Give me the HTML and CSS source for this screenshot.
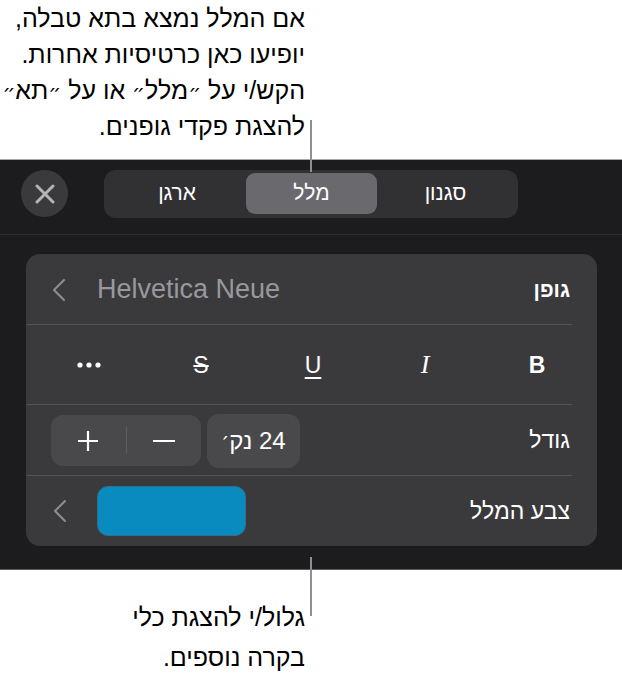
FILE: index.html
```html
<!DOCTYPE html>
<html lang="he">
<head>
<meta charset="utf-8">
<link rel="stylesheet" href="styles.css">
</head>
<body>
<div class="page">
  <div class="callout callout-top" dir="rtl">
    <p class="callout-text">אם המלל נמצא בתא טבלה,<br>יופיעו כאן כרטיסיות אחרות.<br>הקש/י על <span class="gersh">״</span>מלל<span class="gersh">״</span> או על <span class="gersh">״</span>תא<span class="gersh">״</span><br>להצגת פקדי גופנים.</p>
  </div>

  <div class="panel">
    <span class="leader leader-top"></span>
    <span class="leader leader-bottom"></span>
    <div class="header">
      <button class="close" aria-label="סגירה">
        <svg width="20" height="20" viewBox="0 0 20 20"><path d="M2 2 L18 18 M18 2 L2 18" stroke="#b4b4b9" stroke-width="3" stroke-linecap="round" fill="none"/></svg>
      </button>
      <div class="segmented" dir="rtl">
        <div class="seg">סגנון</div>
        <div class="seg seg-selected">מלל</div>
        <div class="seg">ארגן</div>
      </div>
    </div>

    <div class="card" dir="rtl">
      <div class="row row-font">
        <div class="label label-strong">גופן</div>
        <div class="controls" dir="ltr">
          <svg class="chev" width="14" height="24" viewBox="0 0 14 24"><path d="M12 2 L2 12 L12 22" stroke="#8e8e93" stroke-width="2" fill="none" stroke-linecap="round" stroke-linejoin="round"/></svg>
          <span class="font-name">Helvetica Neue</span>
        </div>
      </div>

      <div class="row row-style" dir="ltr">
        <span class="sty sty-more">
          <svg width="26" height="8" viewBox="0 0 26 8"><circle cx="4" cy="4" r="2.6" fill="#fff"/><circle cx="13" cy="4" r="2.6" fill="#fff"/><circle cx="22" cy="4" r="2.6" fill="#fff"/></svg>
        </span>
        <span class="sty sty-strike">S</span>
        <span class="sty sty-under">U</span>
        <span class="sty sty-italic">I</span>
        <span class="sty sty-bold">B</span>
      </div>

      <div class="row row-size">
        <div class="label">גודל</div>
        <div class="controls" dir="ltr">
          <div class="stepper">
            <span class="step">
              <svg width="24" height="24" viewBox="0 0 24 24"><path d="M12 2 V22 M2 12 H22" stroke="#fff" stroke-width="2.2" fill="none"/></svg>
            </span>
            <span class="step-sep"></span>
            <span class="step">
              <svg width="26" height="24" viewBox="0 0 26 24"><path d="M2 12 H24" stroke="#fff" stroke-width="2.2" fill="none"/></svg>
            </span>
          </div>
          <div class="size-box" dir="rtl">24 נק<span class="gersh">׳</span></div>
        </div>
      </div>

      <div class="row row-color">
        <div class="label">צבע המלל</div>
        <div class="controls" dir="ltr">
          <svg class="chev" width="14" height="24" viewBox="0 0 14 24"><path d="M12 2 L2 12 L12 22" stroke="#8e8e93" stroke-width="2" fill="none" stroke-linecap="round" stroke-linejoin="round"/></svg>
          <span class="swatch"></span>
        </div>
      </div>
    </div>
  </div>

  <div class="callout callout-bottom" dir="rtl">
    <p class="callout-text">גלול/י להצגת כלי<br>בקרה נוספים.</p>
  </div>
</div>
</body>
</html>
```

FILE: styles.css
```css
* { box-sizing: border-box; }

html, body {
  margin: 0;
  padding: 0;
  background: #ffffff;
}

body {
  font-family: "Liberation Sans", Arial, "DejaVu Sans", sans-serif;
  width: 622px;
  height: 673px;
  overflow: hidden;
}

.page {
  width: 622px;
}

.callout {
  padding-right: 317px;
}

.callout-text {
  margin: 0;
  font-size: 25px;
  line-height: 36px;
  color: #000;
  text-align: right;
  white-space: nowrap;
}

.gersh {
  font-family: "DejaVu Sans", sans-serif;
  font-size: 0.8em;
  line-height: 1;
}

.callout-top {
  height: 159px;
}

.callout-bottom {
  padding-top: 27px;
}

.callout-bottom .callout-text {
  line-height: 40px;
}

.panel {
  position: relative;
  background: #1c1c1e;
  border-top: 1px solid #a7a7a7;
  border-bottom: 1px solid #5c5c5e;
  padding: 0 25px 23px 26px;
}

.leader {
  position: absolute;
  left: 310px;
  width: 2px;
  background: #8e8e93;
  z-index: 2;
}

.leader-top {
  top: -40px;
  height: 52px;
}

.leader-bottom {
  bottom: -47px;
  height: 59px;
}

.header {
  display: flex;
  align-items: center;
  height: 75px;
  margin: 0 -25px 0 -26px;
  padding: 0 0 7px 21px;
  border-bottom: 1px solid #2e2e31;
  gap: 36px;
}

.close {
  width: 47px;
  height: 47px;
  border-radius: 50%;
  border: none;
  background: #3a3a3c;
  display: flex;
  align-items: center;
  justify-content: center;
  padding: 0;
}

.segmented {
  display: grid;
  grid-template-columns: 137px 131px 138px;
  width: 414px;
  height: 48px;
  padding: 4px;
  border-radius: 12px;
  background: #313134;
}

.seg {
  display: flex;
  align-items: center;
  justify-content: center;
  color: #ffffff;
  font-size: 21px;
  border-radius: 9px;
  padding-bottom: 1px;
}

.seg-selected {
  background: #69696e;
  margin-top: -1px;
}

.card {
  margin-top: 19px;
  background: #3a3a3c;
  border-radius: 14px;
  overflow: hidden;
}

.row {
  display: flex;
  align-items: center;
  padding-right: 27px;
  background-image: linear-gradient(#545457, #545457);
  background-repeat: no-repeat;
  background-size: calc(100% - 25px) 1px;
  background-position: left bottom;
}

.row-font { height: 71px; }
.row-style { height: 80px; }
.row-size { height: 71px; }

.row-color {
  height: 70px;
  background-image: none;
}

.label {
  color: #ffffff;
  font-size: 23px;
}

.label-strong {
  font-weight: 700;
  font-size: 21px;
}

.controls {
  margin-right: auto;
  display: flex;
  align-items: center;
  padding-left: 26px;
}

.chev {
  display: block;
}

.font-name {
  margin-left: 31px;
  color: #98989d;
  font-size: 27px;
}

.row-style {
  display: grid;
  grid-template-columns: repeat(5, 112px);
  justify-content: start;
  padding-left: 7px;
  padding-right: 0;
}

.sty {
  display: flex;
  align-items: center;
  justify-content: center;
  color: #ffffff;
  font-size: 23px;
  height: 30px;
}

.sty-strike {
  text-decoration: line-through;
  text-decoration-thickness: 1.5px;
}

.sty-under {
  text-decoration: underline;
  text-underline-offset: 4px;
  text-decoration-thickness: 2px;
}

.sty-italic {
  font-family: "Liberation Serif", "Times New Roman", serif;
  font-style: italic;
  font-size: 26px;
}

.sty-bold {
  font-weight: 700;
  font-size: 23px;
}

.row-size .controls {
  padding-left: 25px;
  gap: 6px;
}

.stepper {
  display: flex;
  align-items: center;
  width: 150px;
  height: 51px;
  border-radius: 12px;
  background: #49494c;
}

.step {
  flex: 1;
  display: flex;
  align-items: center;
  justify-content: center;
}

.step-sep {
  width: 1px;
  height: 27px;
  background: #5e5e61;
}

.size-box {
  display: flex;
  align-items: center;
  justify-content: center;
  width: 93px;
  height: 54px;
  border-radius: 12px;
  background: #49494c;
  color: #ffffff;
  font-size: 24px;
}

.row-color .controls {
  padding-left: 27px;
}

.swatch {
  display: block;
  width: 149px;
  height: 50px;
  margin-left: 30px;
  border-radius: 11px;
  background: #0a8bbf;
  border: 1px solid #2f6f8c;
}
```
